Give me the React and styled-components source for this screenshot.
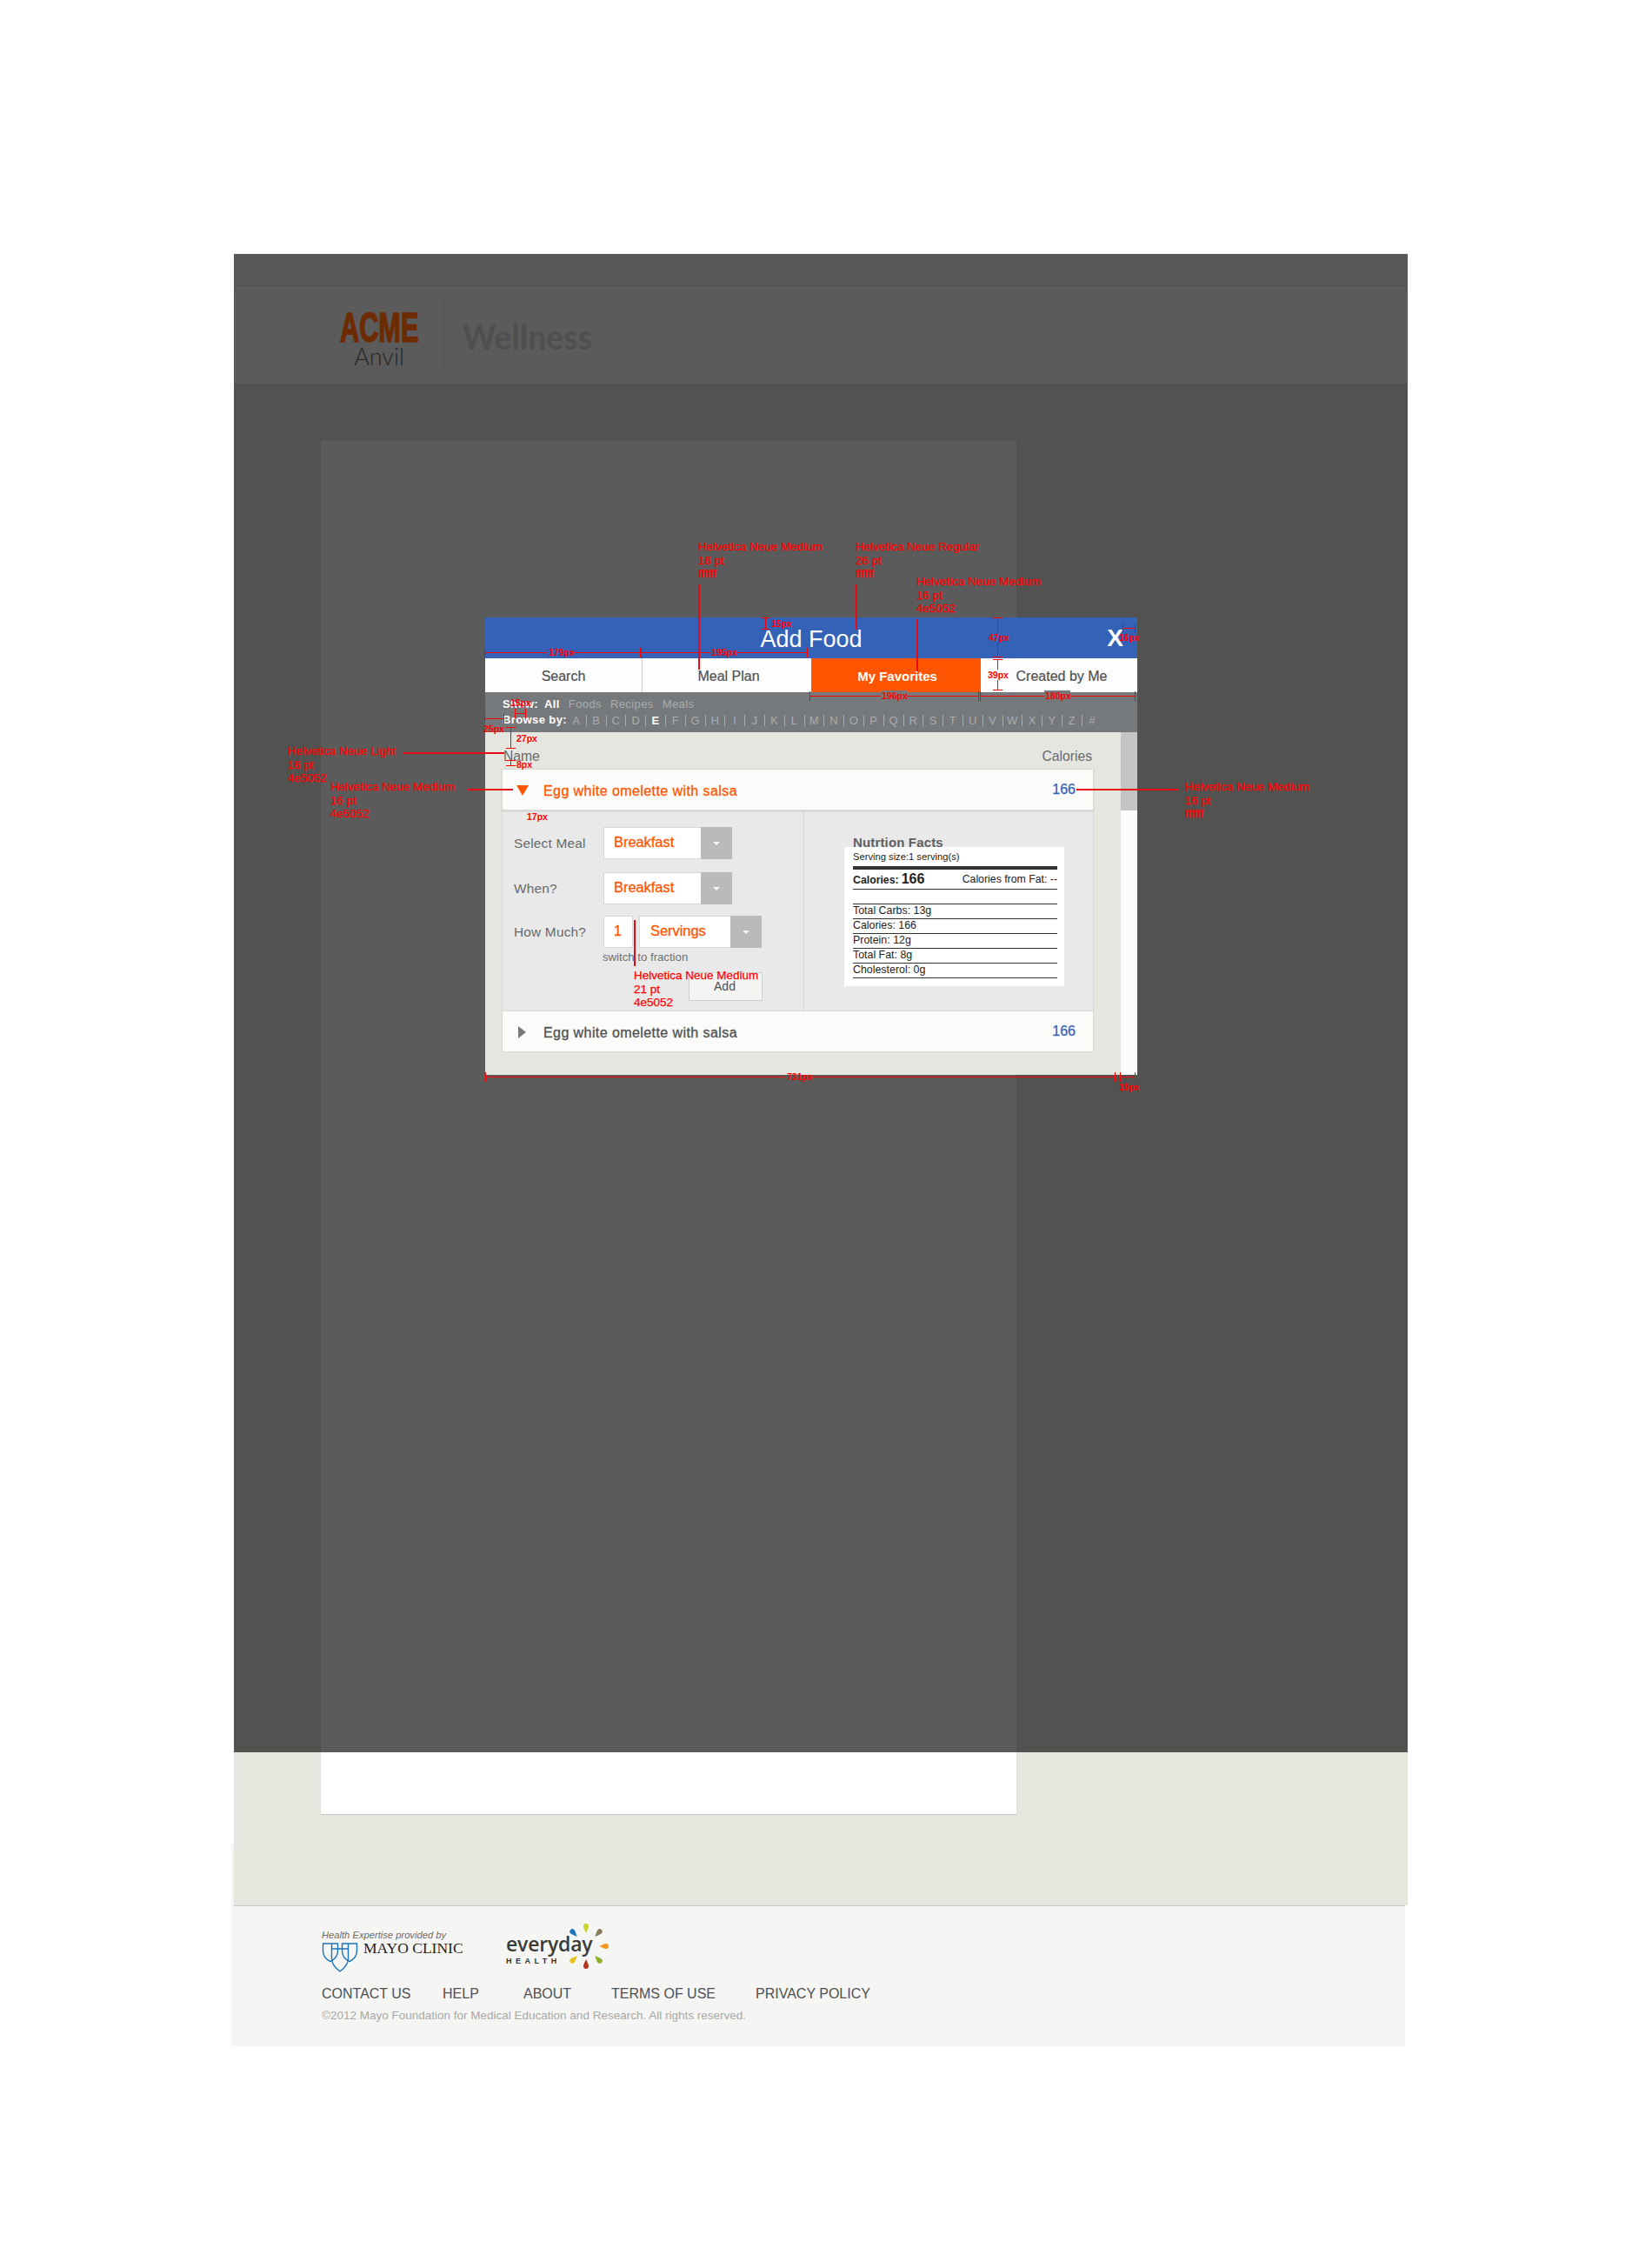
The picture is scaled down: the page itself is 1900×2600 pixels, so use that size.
import React from "react";
import styled, {createGlobalStyle} from "styled-components";

const GlobalStyle = createGlobalStyle`
    html, body {
        margin: 0;
        background: #fff;
        font-family: "Liberation Sans", Arial, sans-serif;
    }
`;

const Canvas = styled.div`
    position: relative;
    width: 1900px;
    height: 2600px;
    overflow: hidden;
`;

const Page = styled.div`
    width: 1350px;
    margin-left: 269px;
    padding-top: 292px;
`;

const TopBar = styled.div`
    height: 36px;
    background: #f7f7f4;
    border-bottom: 1px solid #e0e0dc;
`;

const Header = styled.header`
    display: flex;
    align-items: center;
    height: 112px;
    padding-left: 122px;
    background: #ffffff;
    border-bottom: 1px solid #ecece8;
`;

const AcmeLogo = styled.div`
    position: relative;
    z-index: 2;
    width: 118px;
    height: 92px;
`;

const AcmeWord = styled.div`
    padding-top: 18px;
    font-size: 48px;
    line-height: 40px;
    font-weight: 700;
    color: #6e2a00;
    -webkit-text-stroke: 1.5px #6e2a00;
    transform: scaleX(0.64);
    transform-origin: left center;
    white-space: nowrap;
`;

const AnvilWord = styled.div`
    width: 90px;
    margin-top: -2px;
    text-align: center;
    font-family: "Lato", sans-serif;
    font-weight: 300;
    font-size: 27px;
    line-height: 30px;
    color: #262626;
`;

const LogoDivider = styled.div`
    position: relative;
    z-index: 2;
    width: 1px;
    height: 92px;
    background: #555553;
`;

const WellnessWord = styled.div`
    margin-left: 22px;
    margin-top: 2px;
    font-family: "Lato", sans-serif;
    font-weight: 700;
    font-size: 41px;
    letter-spacing: 0.5px;
    color: #dcdcdc;
    transform: scaleX(0.89);
    transform-origin: left center;
`;

const Main = styled.main`
    height: 1579px;
    padding: 65px 0 105px 100px;
    background: #e6e6df;
`;

const ContentPanel = styled.div`
    width: 800px;
    height: 1579px;
    background: #ffffff;
    box-shadow: 0 1px 1px #c8c8c2;
`;

const Footer = styled.footer`
    position: relative;
    box-sizing: border-box;
    width: 1350px;
    height: 162px;
    margin-left: -3px;
    padding: 22px 0 0 104px;
    background: #f5f5f3;
    border-top: 1px solid #c9c9c5;

    &::before {
        content: "";
        position: absolute;
        left: 0;
        top: -71px;
        width: 3px;
        height: 71px;
        background: #f3f3f1;
    }
`;

const LogoRow = styled.div`
    display: flex;
    height: 54px;
`;

const MayoLogo = styled.div`
    width: 212px;
    padding-top: 4px;
`;

const MayoTagline = styled.div`
    font-size: 11.2px;
    line-height: 14px;
    font-style: italic;
    color: #6b6b6b;
`;

const MayoLine = styled.div`
    display: flex;
    align-items: flex-start;
    gap: 6px;
    margin-top: 2px;
`;

const MayoName = styled.div`
    margin-top: -2px;
    font-family: "Liberation Serif", serif;
    font-size: 17.5px;
    line-height: 16px;
    color: #222;
    white-space: nowrap;
`;

const EverydayLogo = styled.div`
    position: relative;
    width: 116px;
    height: 48px;
    padding-top: 9px;
`;

const EverydayWord = styled.div`
    font-family: "Open Sans", sans-serif;
    font-weight: 600;
    font-size: 23px;
    line-height: 24px;
    letter-spacing: -0.2px;
    color: #3b3b3b;
`;

const HealthWord = styled.div`
    margin-top: 3px;
    font-size: 9px;
    line-height: 11px;
    font-weight: 700;
    letter-spacing: 4.5px;
    color: #333;
`;

const Rays = styled.svg`
    position: absolute;
    left: 0;
    top: 0;
    overflow: visible;
`;

const FooterLinks = styled.nav`
    display: flex;
    margin-top: 16px;
`;

const FooterLink = styled.span`
    width: ${(p) => p.$w}px;
    font-size: 16px;
    line-height: 18px;
    color: #4e5052;
    white-space: nowrap;
`;

const Copyright = styled.div`
    margin-top: 8px;
    font-size: 13.5px;
    line-height: 16px;
    color: #a8a8a8;
`;

const Overlay = styled.div`
    position: absolute;
    left: 269px;
    top: 292px;
    width: 1350px;
    height: 1723px;
    background: rgba(0, 0, 0, 0.643);
    z-index: 1;
`;

const Modal = styled.section`
    position: absolute;
    left: 558px;
    top: 710px;
    width: 750px;
    z-index: 3;
`;

const ModalHeader = styled.div`
    position: relative;
    height: 47px;
    background: #3462b7;
    color: #fff;
    text-align: center;
`;

const ModalTitle = styled.h2`
    margin: 0;
    font-size: 27px;
    line-height: 50px;
    font-weight: 400;
`;

const CloseX = styled.span`
    position: absolute;
    right: 16px;
    top: 8px;
    font-size: 28px;
    line-height: 32px;
    font-weight: 700;
`;

const Tabs = styled.div`
    display: flex;
    height: 39px;
    background: #fdfdfd;
`;

const Tab = styled.div`
    box-sizing: border-box;
    width: ${(p) => p.$w}px;
    display: flex;
    align-items: center;
    justify-content: center;
    padding: 2px 0 0 ${(p) => p.$shift || 0}px;
    font-size: ${(p) => (p.$active ? "15px" : "16px")};
    font-weight: ${(p) => (p.$active ? 700 : 400)};
    color: ${(p) => (p.$active ? "#fff" : "#4e5052")};
    background: ${(p) => (p.$active ? "#ff5500" : "transparent")};
    border-right: ${(p) => (p.$divider ? "1px solid #cfcfcb" : "none")};
    -webkit-text-stroke: ${(p) => (p.$active ? "0" : "0.2px #4e5052")};
`;

const FilterBar = styled.div`
    box-sizing: border-box;
    height: 46px;
    padding: 5px 0 0 20px;
    background: #76797c;
    font-size: 13px;
    line-height: 18px;
    letter-spacing: 0.4px;
    color: #a9acae;
`;

const FilterLine = styled.div`
    display: flex;
    align-items: center;
`;

const FilterHead = styled.span`
    flex: none;
    width: ${(p) => p.$w}px;
    font-weight: 700;
    color: #fff;
    white-space: nowrap;
`;

const FilterOption = styled.span`
    margin-right: 10px;
    font-weight: ${(p) => (p.$on ? 700 : 400)};
    color: ${(p) => (p.$on ? "#fff" : "#a9acae")};
`;

const Letters = styled.div`
    display: flex;
`;

const Letter = styled.span`
    display: inline-block;
    box-sizing: border-box;
    width: 22.8px;
    text-align: center;
    line-height: 13px;
    font-weight: ${(p) => (p.$on ? 700 : 400)};
    color: ${(p) => (p.$on ? "#fff" : "#a9acae")};
    border-right: ${(p) => (p.$last ? "none" : "1px solid #a9acae")};
`;

const ListArea = styled.div`
    display: flex;
    height: 394px;
`;

const ListColumn = styled.div`
    box-sizing: border-box;
    width: 731px;
    padding: 0 31px 0 19px;
    background: #e6e6e0;
`;

const ScrollTrack = styled.div`
    width: 19px;
    background: #fcfcfc;
`;

const ScrollThumb = styled.div`
    height: 90px;
    background: #c4c4c4;
`;

const ColumnHeads = styled.div`
    display: flex;
    align-items: center;
    justify-content: space-between;
    box-sizing: border-box;
    height: 42px;
    padding: 13px 2px 0 2px;
    font-size: 15.7px;
    color: #67696b;
`;

const FoodRow = styled.div`
    box-sizing: border-box;
    display: flex;
    align-items: center;
    height: 48px;
    padding: 0 20px 0 15px;
    background: #fbfbf9;
    border: 1px solid #d9d9d5;
    box-shadow: ${(p) => (p.$open ? "0 1px 2px rgba(0,0,0,.12)" : "none")};
    position: relative;
`;

const Caret = styled.svg`
    width: 16px;
    height: 14px;
    margin: 2px 16px 0 0;
    flex: none;
`;

const FoodName = styled.span`
    flex: 1;
    margin-top: 3px;
    font-size: 16px;
    letter-spacing: 0.42px;
    color: ${(p) => (p.$open ? "#ff5500" : "#4e5052")};
    -webkit-text-stroke: 0.3px ${(p) => (p.$open ? "#ff5500" : "#4e5052")};
`;

const FoodCalories = styled.span`
    font-size: 16px;
    color: #3462b7;
    -webkit-text-stroke: 0.25px #3462b7;
`;

const Detail = styled.div`
    box-sizing: border-box;
    display: flex;
    height: 230px;
    background: #e9e9e9;
    border-left: 1px solid #d9d9d5;
    border-right: 1px solid #d9d9d5;
`;

const FormColumn = styled.div`
    box-sizing: border-box;
    width: 347px;
    padding: 19px 0 0 13px;
    border-right: 1px solid #d4d4d0;
`;

const FormRow = styled.div`
    display: flex;
    align-items: center;
    margin-top: ${(p) => p.$mt || 0}px;
`;

const FormLabel = styled.label`
    width: 103px;
    font-size: 15.4px;
    letter-spacing: 0.2px;
    color: #67696b;
`;

const Select = styled.div`
    box-sizing: border-box;
    display: flex;
    width: ${(p) => p.$w}px;
    height: 37px;
    margin-left: ${(p) => p.$ml || 0}px;
    background: #fff;
    border: 1px solid #d6d6d6;
`;

const SelectValue = styled.span`
    flex: 1;
    padding-left: ${(p) => p.$pad}px;
    font-size: 16.4px;
    line-height: 33px;
    color: #ff5500;
    -webkit-text-stroke: 0.3px #ff5500;
`;

const SelectArrow = styled.span`
    display: flex;
    align-items: center;
    justify-content: center;
    width: 36px;
    margin: -1px;
    background: #bababa;

    &::after {
        content: "";
        border-left: 4px solid transparent;
        border-right: 4px solid transparent;
        border-top: 4px solid #f4f4f4;
    }
`;

const QtyInput = styled.div`
    box-sizing: border-box;
    width: 34px;
    height: 37px;
    padding-left: 11px;
    background: #fff;
    border: 1px solid #d6d6d6;
    font-size: 16px;
    line-height: 33px;
    color: #ff5500;
    -webkit-text-stroke: 0.3px #ff5500;
`;

const SwitchLink = styled.div`
    margin: 3px 0 0 102px;
    font-size: 13.2px;
    line-height: 16px;
    color: #6d6f71;
`;

const AddButton = styled.button`
    display: block;
    box-sizing: border-box;
    width: 85px;
    height: 33px;
    margin: 9px 0 0 201px;
    padding: 0 2px 1px 0;
    background: #f4f4f3;
    border: 1px solid #cfcfcf;
    font-family: inherit;
    font-size: 14px;
    color: #4e5052;
`;

const NutritionColumn = styled.div`
    flex: 1;
    padding-top: 29px;
`;

const NutritionTitle = styled.h3`
    position: relative;
    z-index: 1;
    margin: 0 0 0 56px;
    font-size: 15px;
    line-height: 16px;
    font-weight: 700;
    letter-spacing: 0.15px;
    color: #5d5f61;
`;

const NutritionPanel = styled.div`
    box-sizing: border-box;
    width: 253px;
    height: 160px;
    margin: -3px 0 0 46px;
    padding: 3px 8px 0 10px;
    background: #fff;
    color: #222;
`;

const ServingLine = styled.div`
    font-size: 11.2px;
    line-height: 16px;
`;

const ThickRule = styled.div`
    height: 4px;
    margin-top: 3px;
    background: #333;
`;

const CaloriesLine = styled.div`
    display: flex;
    align-items: center;
    justify-content: space-between;
    height: 22px;
    border-bottom: 1px solid #333;
    font-size: 12.3px;
`;

const CaloriesLabel = styled.span`
    font-weight: 700;
`;

const CaloriesValue = styled.span`
    margin-left: 3px;
    font-size: 16px;
    font-weight: 700;
`;

const NutrientLine = styled.div`
    box-sizing: border-box;
    height: 17px;
    border-bottom: 1px solid #333;
    font-size: 12.4px;
    line-height: 15px;
`;

const AnnotationText = styled.div`
    position: absolute;
    left: ${(p) => p.$x}px;
    top: ${(p) => p.$y}px;
    z-index: 4;
    font-size: 13.5px;
    line-height: 15.7px;
    color: #ff0000;
    -webkit-text-stroke: 0.25px #ff0000;
    white-space: nowrap;
`;

const RedLine = styled.div`
    position: absolute;
    left: ${(p) => p.$x}px;
    top: ${(p) => p.$y}px;
    width: ${(p) => p.$w}px;
    height: ${(p) => p.$h}px;
    z-index: 4;
    background: #e80a14;
`;

const DimLabel = styled.div`
    position: absolute;
    left: ${(p) => p.$x}px;
    top: ${(p) => p.$y - 7}px;
    z-index: 4;
    font-size: 10.5px;
    line-height: 14px;
    font-weight: 700;
    color: #f00;
    white-space: nowrap;
`;

const HDim = styled.div`
    position: absolute;
    left: ${(p) => p.$x}px;
    top: ${(p) => p.$y - 5}px;
    width: ${(p) => p.$w}px;
    height: 11px;
    z-index: 4;
    box-sizing: border-box;
    border-left: ${(p) => (p.$openLeft ? "none" : "1px solid #f00")};
    border-right: ${(p) => (p.$openRight ? "none" : "1px solid #f00")};

    &::before {
        content: "";
        position: absolute;
        left: 0;
        right: 0;
        top: 5px;
        height: 1px;
        background: #f00;
    }
`;

const VDim = styled.div`
    position: absolute;
    left: ${(p) => p.$x - 5}px;
    top: ${(p) => p.$y}px;
    width: 11px;
    height: ${(p) => p.$h}px;
    z-index: 4;
    box-sizing: border-box;
    border-top: 1px solid #f00;
    border-bottom: 1px solid #f00;

    &::before {
        content: "";
        position: absolute;
        top: 0;
        bottom: 0;
        left: 5px;
        width: 1px;
        background: #f00;
    }
`;

const LabelGap = styled.div`
    position: absolute;
    left: ${(p) => p.$x}px;
    top: ${(p) => p.$y}px;
    width: ${(p) => p.$w}px;
    height: ${(p) => p.$h}px;
    z-index: 4;
    background: ${(p) => p.$bg};
`;

const notes = [
    {x: 803, y: 621, lines: ["Helvetica Neue Medium", "16 pt", "ffffff"]},
    {x: 984, y: 621, lines: ["Helvetica Neue Regular", "26 pt", "ffffff"]},
    {x: 1054, y: 661, lines: ["Helvetica Neue Medium", "16 pt", "4e5052"]},
    {x: 331, y: 856, lines: ["Helvetica Neue Light", "16 pt", "4e5052"]},
    {x: 380, y: 897, lines: ["Helvetica Neue Medium", "16 pt", "4e5052"]},
    {x: 1363, y: 897, lines: ["Helvetica Neue Medium", "16 pt", "ffffff"]},
    {x: 729, y: 1114, lines: ["Helvetica Neue Medium", "21 pt", "4e5052"]},
];

const lines = [
    {x: 803, y: 672, w: 2, h: 98},
    {x: 984, y: 672, w: 2, h: 52},
    {x: 1054, y: 712, w: 2, h: 60},
    {x: 463, y: 865, w: 117, h: 2},
    {x: 538, y: 907, w: 52, h: 2},
    {x: 1238, y: 907, w: 118, h: 2},
    {x: 729, y: 1058, w: 2, h: 53},
];

const hDims = [
    {x: 557, y: 750, w: 180},
    {x: 737, y: 750, w: 192},
    {x: 931, y: 800, w: 195},
    {x: 1127, y: 800, w: 179},
    {x: 557, y: 826, w: 23},
    {x: 592, y: 820, w: 13},
    {x: 1291, y: 722, w: 15},
    {x: 558, y: 1238, w: 345, openRight: true},
    {x: 933, y: 1238, w: 350, openLeft: true},
    {x: 1288, y: 1238, w: 18},
];

const vDims = [
    {x: 880, y: 710, h: 14},
    {x: 1147, y: 710, h: 46},
    {x: 1147, y: 758, h: 36},
    {x: 587, y: 836, h: 25},
    {x: 587, y: 874, h: 7},
];

const dimLabels = [
    {x: 631, y: 750, text: "179px", gap: 30, bg: "#3462b7"},
    {x: 818, y: 750, text: "195px", gap: 30, bg: "#3462b7"},
    {x: 1014, y: 800, text: "196px", gap: 30, bg: "#76797c"},
    {x: 1202, y: 800, text: "180px", gap: 30, bg: "#76797c"},
    {x: 905, y: 1238, text: "731px"},
    {x: 887, y: 717, text: "15px"},
    {x: 1137, y: 733, text: "47px", gap: 24, bg: "#3462b7"},
    {x: 1136, y: 776, text: "39px", gap: 26, bg: "#ffffff"},
    {x: 1287, y: 733, text: "16px"},
    {x: 556, y: 838, text: "25px"},
    {x: 587, y: 808, text: "15px"},
    {x: 594, y: 849, text: "27px"},
    {x: 594, y: 879, text: "8px"},
    {x: 606, y: 939, text: "17px"},
    {x: 1287, y: 1250, text: "19px"},
];

const letters = "ABCDEFGHIJKLMNOPQRSTUVWXYZ#".split("");
const nutrients = ["Total Carbs: 13g", "Calories: 166", "Protein: 12g", "Total Fat: 8g", "Cholesterol: 0g"];
const rayAngles = [
    {a: 0, c: "#c8d426"},
    {a: 43, c: "#8a7a5e"},
    {a: 90, c: "#f7941d"},
    {a: 137, c: "#8fae2c"},
    {a: 180, c: "#b5391e"},
    {a: 223, c: "#e8c21c"},
    {a: -43, c: "#1c78c0"},
];

const CaretIcon = ({open}) => (
    <Caret viewBox="0 0 16 14">
        {open ? <polygon points="1,1 15,1 8,13" fill="#ff5500" /> : <polygon points="3,0 12,7 3,14" fill="#76797c" />}
    </Caret>
);

const MayoShield = () => (
    <svg width="42" height="34" viewBox="0 0 41 34" fill="none" stroke="#1c74bb" strokeWidth="1.4">
        <path d="M1 1h17v8c0 6-3 10-8.500 12.500C4 19 1 15 1 9z" />
        <path d="M23 1h17v8c0 6-3 10-8.500 12.500C26 19 23 15 23 9z" />
        <path d="M11 7h19v11c0 7-4 11-9.500 15C15 29 11 25 11 18z" />
        <path d="M11 1v6M30 1v6" />
    </svg>
);

const EverydayRays = () => (
    <Rays width="116" height="48" viewBox="0 0 116 48">
        {rayAngles.map((r) => (
            <path
                key={r.a}
                d="M0 -15C-1.500 -19 -3 -20.500 -3 -23a3 3 0 0 1 6 0C3 -20.500 1.500 -19 0 -15z"
                fill={r.c}
                transform={`translate(92 24) rotate(${r.a})`}
            />
        ))}
    </Rays>
);

const SelectBox = ({value, w, pad, ml}) => (
    <Select $w={w} $ml={ml}>
        <SelectValue $pad={pad}>{value}</SelectValue>
        <SelectArrow />
    </Select>
);

export default function App() {
    return (
        <Canvas>
            <GlobalStyle />
            <Page>
                <TopBar />
                <Header>
                    <AcmeLogo>
                        <AcmeWord>ACME</AcmeWord>
                        <AnvilWord>Anvil</AnvilWord>
                    </AcmeLogo>
                    <LogoDivider />
                    <WellnessWord>Wellness</WellnessWord>
                </Header>
                <Main>
                    <ContentPanel />
                </Main>
                <Footer>
                    <LogoRow>
                        <MayoLogo>
                            <MayoTagline>Health Expertise provided by</MayoTagline>
                            <MayoLine>
                                <MayoShield />
                                <MayoName>MAYO CLINIC</MayoName>
                            </MayoLine>
                        </MayoLogo>
                        <EverydayLogo>
                            <EverydayWord>everyday</EverydayWord>
                            <HealthWord>HEALTH</HealthWord>
                            <EverydayRays />
                        </EverydayLogo>
                    </LogoRow>
                    <FooterLinks>
                        <FooterLink $w={139}>CONTACT US</FooterLink>
                        <FooterLink $w={93}>HELP</FooterLink>
                        <FooterLink $w={101}>ABOUT</FooterLink>
                        <FooterLink $w={166}>TERMS OF USE</FooterLink>
                        <FooterLink $w={140}>PRIVACY POLICY</FooterLink>
                    </FooterLinks>
                    <Copyright>©2012 Mayo Foundation for Medical Education and Research. All rights reserved.</Copyright>
                </Footer>
            </Page>
            <Overlay />
            <Modal>
                <ModalHeader>
                    <ModalTitle>Add Food</ModalTitle>
                    <CloseX>X</CloseX>
                </ModalHeader>
                <Tabs>
                    <Tab $w={181} $divider>Search</Tab>
                    <Tab $w={194} $shift={4}>Meal Plan</Tab>
                    <Tab $w={195} $shift={3} $active>My Favorites</Tab>
                    <Tab $w={180} $shift={6}>Created by Me</Tab>
                </Tabs>
                <FilterBar>
                    <FilterLine>
                        <FilterHead $w={48}>Show:</FilterHead>
                        <FilterOption $on>All</FilterOption>
                        <FilterOption>Foods</FilterOption>
                        <FilterOption>Recipes</FilterOption>
                        <FilterOption>Meals</FilterOption>
                    </FilterLine>
                    <FilterLine>
                        <FilterHead $w={74}>Browse by:</FilterHead>
                        <Letters>
                            {letters.map((l) => (
                                <Letter key={l} $on={l === "E"} $last={l === "#"}>{l}</Letter>
                            ))}
                        </Letters>
                    </FilterLine>
                </FilterBar>
                <ListArea>
                    <ListColumn>
                        <ColumnHeads>
                            <span>Name</span>
                            <span>Calories</span>
                        </ColumnHeads>
                        <FoodRow $open>
                            <CaretIcon open />
                            <FoodName $open>Egg white omelette with salsa</FoodName>
                            <FoodCalories>166</FoodCalories>
                        </FoodRow>
                        <Detail>
                            <FormColumn>
                                <FormRow>
                                    <FormLabel>Select Meal</FormLabel>
                                    <SelectBox value="Breakfast" w={148} pad={11} />
                                </FormRow>
                                <FormRow $mt={15}>
                                    <FormLabel>When?</FormLabel>
                                    <SelectBox value="Breakfast" w={148} pad={11} />
                                </FormRow>
                                <FormRow $mt={13}>
                                    <FormLabel>How Much?</FormLabel>
                                    <QtyInput>1</QtyInput>
                                    <SelectBox value="Servings" w={141} pad={12} ml={7} />
                                </FormRow>
                                <SwitchLink>switch to fraction</SwitchLink>
                                <AddButton>Add</AddButton>
                            </FormColumn>
                            <NutritionColumn>
                                <NutritionTitle>Nutrtion Facts</NutritionTitle>
                                <NutritionPanel>
                                    <ServingLine>Serving size:1 serving(s)</ServingLine>
                                    <ThickRule />
                                    <CaloriesLine>
                                        <span>
                                            <CaloriesLabel>Calories:</CaloriesLabel>
                                            <CaloriesValue>166</CaloriesValue>
                                        </span>
                                        <span>Calories from Fat: --</span>
                                    </CaloriesLine>
                                    <NutrientLine />
                                    {nutrients.map((n) => (
                                        <NutrientLine key={n}>{n}</NutrientLine>
                                    ))}
                                </NutritionPanel>
                            </NutritionColumn>
                        </Detail>
                        <FoodRow>
                            <CaretIcon />
                            <FoodName>Egg white omelette with salsa</FoodName>
                            <FoodCalories>166</FoodCalories>
                        </FoodRow>
                    </ListColumn>
                    <ScrollTrack>
                        <ScrollThumb />
                    </ScrollTrack>
                </ListArea>
            </Modal>
            {notes.map((n) => (
                <AnnotationText key={`${n.x}-${n.y}`} $x={n.x} $y={n.y}>
                    {n.lines.map((l) => (
                        <div key={l}>{l}</div>
                    ))}
                </AnnotationText>
            ))}
            {lines.map((l) => (
                <RedLine key={`${l.x}-${l.y}`} $x={l.x} $y={l.y} $w={l.w} $h={l.h} />
            ))}
            {hDims.map((d) => (
                <HDim key={`${d.x}-${d.y}`} $x={d.x} $y={d.y} $w={d.w} $openLeft={d.openLeft} $openRight={d.openRight} />
            ))}
            {vDims.map((d) => (
                <VDim key={`${d.x}-${d.y}`} $x={d.x} $y={d.y} $h={d.h} />
            ))}
            {dimLabels.map((d) =>
                d.gap ? (
                    <React.Fragment key={`${d.x}-${d.y}`}>
                        <LabelGap $x={d.x - 1} $y={d.y - 6} $w={d.gap} $h={12} $bg={d.bg} />
                        <DimLabel $x={d.x} $y={d.y}>{d.text}</DimLabel>
                    </React.Fragment>
                ) : (
                    <DimLabel key={`${d.x}-${d.y}`} $x={d.x} $y={d.y}>{d.text}</DimLabel>
                )
            )}
        </Canvas>
    );
}
